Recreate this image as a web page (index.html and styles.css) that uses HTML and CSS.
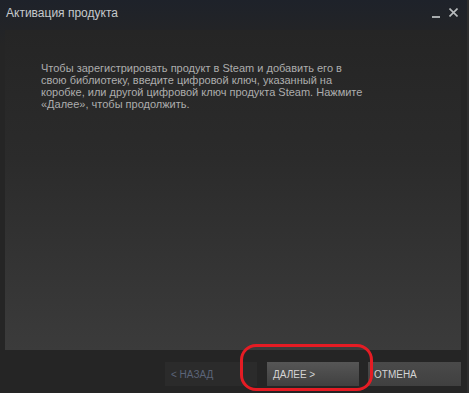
FILE: index.html
```html
<!DOCTYPE html>
<html lang="ru">
<head>
    <meta charset="UTF-8">
    <title>Активация продукта</title>
    <link rel="stylesheet" href="styles.css">
</head>
<body>
    <div class="window">
        <div class="title-bar">
            <div class="title">Активация продукта</div>
            <div class="controls">
                <span class="min-btn"></span>
                <svg class="close-btn" width="9" height="9" viewBox="0 0 9 9">
                    <path d="M0.5 0.5 L8.5 8.5 M8.5 0.5 L0.5 8.5" stroke="#b8bcbe" stroke-width="1.6"/>
                </svg>
            </div>
        </div>

        <div class="panel">
            <p class="intro">Чтобы зарегистрировать продукт в Steam и добавить его в<br>
                свою библиотеку, введите цифровой ключ, указанный на<br>
                коробке, или другой цифровой ключ продукта Steam. Нажмите<br>
                «Далее», чтобы продолжить.</p>
        </div>

        <div class="footer">
            <button class="btn btn-back" disabled>&lt; НАЗАД</button>
            <button class="btn btn-next">ДАЛЕЕ &gt;</button>
            <button class="btn btn-cancel">ОТМЕНА</button>
            <div class="highlight"></div>
        </div>
    </div>
</body>
</html>
```

FILE: styles.css
```css
body {
    margin: 0;
    padding: 0;
    background-color: #252525;
    font-family: 'Liberation Sans', Arial, sans-serif;
    overflow: hidden;
}

.window {
    width: 469px;
    height: 393px;
    display: flex;
    flex-direction: column;
    background: linear-gradient(to bottom, #1e222a 0px, #252525 45px);
    border-right: 2px solid #2e2e2e;
    box-sizing: border-box;
}

.title-bar {
    height: 30px;
    display: flex;
    justify-content: space-between;
    padding: 6px 9px 0 6px;
    box-sizing: border-box;
}

.title {
    color: #c6cacd;
    font-size: 12px;
}

.controls {
    display: flex;
    align-items: flex-start;
    gap: 9px;
    padding-top: 2px;
}

.min-btn {
    width: 8px;
    height: 2px;
    margin-top: 8px;
    background-color: #a8acae;
}

.panel {
    flex: 1;
    margin: 0 6px 0 5px;
    background: linear-gradient(to bottom, #252525 0%, #2b2b2b 40%, #3b3b3b 100%);
    padding: 32px 36px 0 36px;
}

.intro {
    margin: 0;
    width: 340px;
    color: #adadad;
    font-size: 11px;
    line-height: 12px;
    white-space: nowrap;
}

.footer {
    position: relative;
    height: 43px;
    display: flex;
    justify-content: flex-end;
    align-items: flex-start;
    gap: 9px;
    padding: 12px 6px 0 0;
    box-sizing: border-box;
}

.btn {
    width: 92px;
    height: 24px;
    border: none;
    padding: 1px 0 0 6px;
    text-align: left;
    font-family: 'Liberation Sans', Arial, sans-serif;
    font-size: 10px;
    color: #d4d4d4;
    cursor: pointer;
}

.btn-back {
    margin-right: 1px;
    background-color: #2b2b2b;
    color: #5b6478;
    cursor: default;
}

.btn-next {
    background: linear-gradient(to bottom, #565656, #404040);
}

.btn-cancel {
    width: 93px;
    background: linear-gradient(to bottom, #4a4a4a, #404040);
}

.highlight {
    position: absolute;
    left: 240px;
    top: -6px;
    width: 127px;
    height: 41px;
    border: 3px solid #e51c24;
    border-radius: 16px;
    pointer-events: none;
}
```
